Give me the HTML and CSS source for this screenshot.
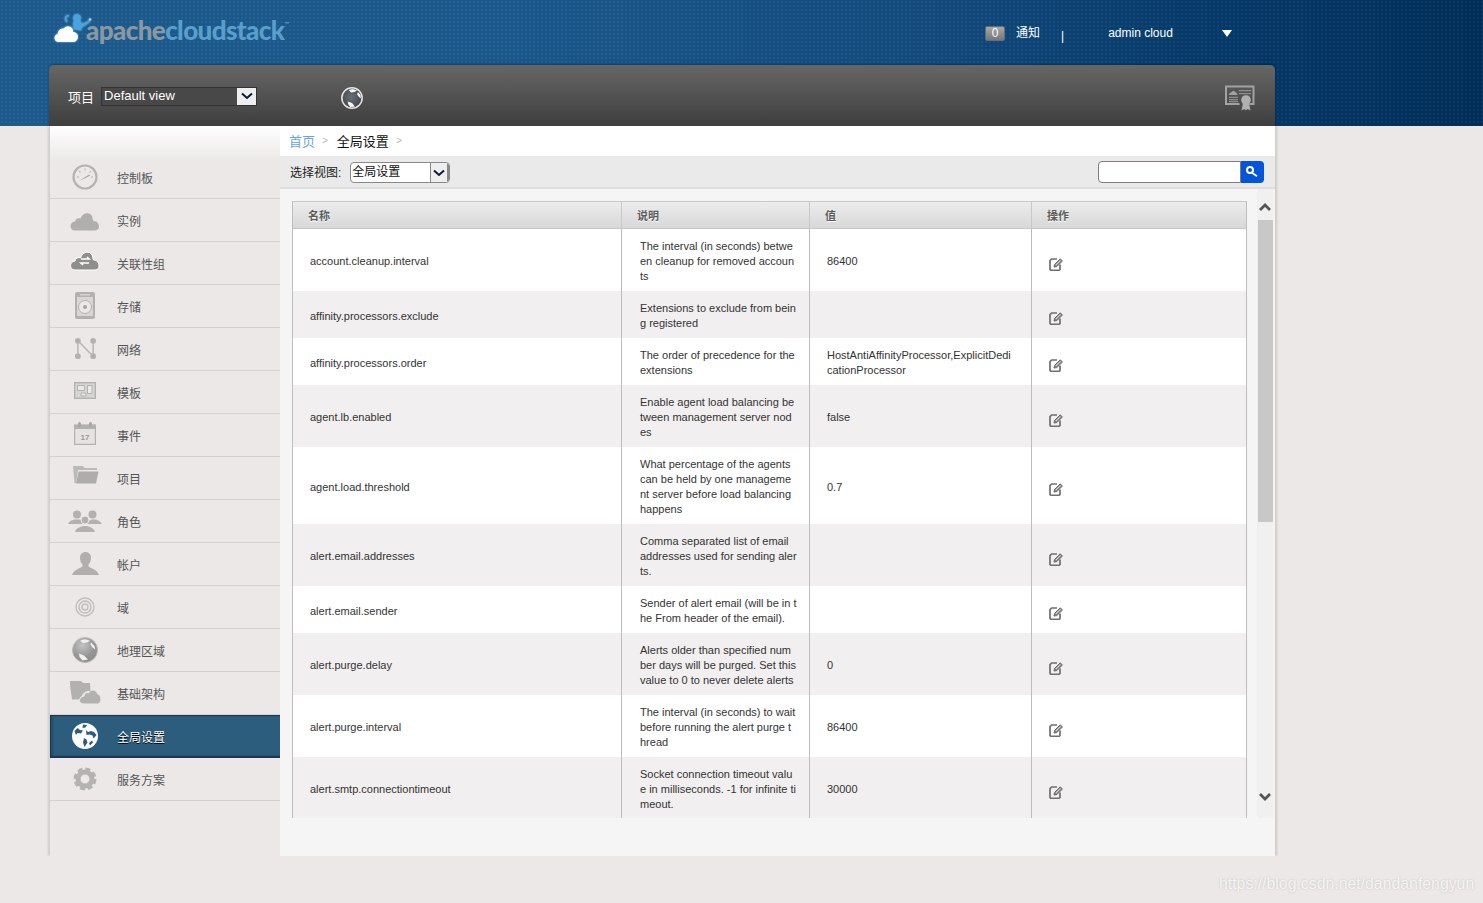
FILE: index.html
```html
<!DOCTYPE html>
<html lang="zh">
<head>
<meta charset="utf-8">
<title>CloudStack</title>
<link rel="stylesheet" href="styles.css">
</head>
<body>
<svg class="defs" width="0" height="0" aria-hidden="true">
  <symbol id="i-edit" viewBox="0 0 14 14">
    <path d="M8 2H2.600L1 3.600v8.900l.8.8h8.400l.8-.8V7.500" fill="none" stroke="#707070" stroke-width="1.700"/>
    <path d="M5 10l.6-2.600L11.200 1.800l2.200 2.200-5.600 5.600z" fill="#8a8a8a" stroke="#666" stroke-width="1" stroke-linejoin="round"/>
    <path d="M6.800 8l4.600-4.600" stroke="#fff" stroke-width=".8"/>
  </symbol>
  <radialGradient id="g-gloss" cx=".4" cy=".3" r=".8">
    <stop offset="0" stop-color="#c4c4c4"/><stop offset=".6" stop-color="#959595"/><stop offset="1" stop-color="#8a8a8a"/>
  </radialGradient>
  <radialGradient id="g-dark" cx=".45" cy=".45" r=".65">
    <stop offset="0" stop-color="#6a6f75"/><stop offset="1" stop-color="#3c4046"/>
  </radialGradient>
</svg>

<header class="masthead">
  <div class="topbar">
    <div class="logo">
      <svg class="logo-mark" width="38" height="33" viewBox="0 0 38 33">
        <path d="M13 9c-3-4-1-7 2-6" fill="none" stroke="#49a3de" stroke-width="1.600"/>
        <circle cx="23" cy="5" r="3.800" fill="#49a3de"/>
        <path d="M19 9l7-1 2 3 7-3.500.8 1.400-8 5.600-1 3-7-1.500z" fill="#49a3de"/>
        <circle cx="36" cy="6.500" r="1.200" fill="#a9d8f2"/>
        <path class="logo-cloud" d="M5 29c-3.200 0-4.500-2.200-4.500-4.300 0-2 1.300-3.400 3.100-3.800C3.900 17.400 6.800 15.200 9.500 15.600c1.400-2.300 4.500-3.200 6.800-1.800 2.200 1.200 3.200 3.200 2.700 5.200 2.700 0 5 1.800 5 4.700 0 3-2.300 5.300-5 5.300z" fill="#fff"/>
      </svg>
      <span class="logo-text"><span class="logo-a">apache</span><span class="logo-b">cloudstack</span><sup class="logo-tm">™</sup></span>
    </div>
    <div class="userbar">
      <span class="badge">0</span>
      <span class="notice">通知</span>
      <span class="pipe">|</span>
      <span class="user">admin cloud</span>
      <span class="tri"></span>
    </div>
  </div>
  <nav class="navbar">
    <span class="nav-label">项目</span>
    <div class="fake-select dark"><span class="fake-value">Default view</span><span class="fake-btn"><svg width="12" height="8" viewBox="0 0 12 8"><path d="M1 1.500l5 4.500 5-4.500" fill="none" stroke="#0a1c2e" stroke-width="2"/></svg></span></div>
    <svg class="nav-globe" width="22" height="22" viewBox="0 0 26 26">
      <circle cx="13" cy="13" r="12" fill="url(#g-dark)" stroke="#e3e6e9" stroke-width="1.800"/>
      <path d="M9 3.500l5-1 5 1.500-3 2-4 .5zM20 6l3 3.500.5 4-2.500-2-2-3zM8 17l5 2 3.500 4-5.500 1-2.500-3.500z" fill="#f4f5f6"/>
    </svg>
    <svg class="nav-cert" width="32" height="27" viewBox="0 0 32 27">
      <path d="M1 1.500h29.500V21H25.500v-2H28.500V3.500H3v15.500H15.500V21H1z" fill="#a2a2a2"/>
      <path d="M5 11c0-2 1.500-2.500 2.500-2.500C8 6.500 11 6.500 11.500 8.500c1.500 0 2 1.500 2 2.500z" fill="#a2a2a2"/>
      <path d="M15 6h12v1.300H15zM15 9h12v1.300H15zM5 12.800h9v1.300H5zM5 15h9v1.300H5zM5 17h9v1.300H5z" fill="#8e8e8e"/>
      <circle cx="22" cy="16" r="4.800" fill="#b0b0b0"/>
      <path d="M19 19l-1.500 7.500 3-1.500 1.500 1.500 1.500-1.500 3 1.500L25 19z" fill="#b0b0b0"/>
    </svg>
  </nav>
</header>

<div class="shell">
  <aside class="sidebar">
    <ul class="menu">
      <li class="item"><span class="ico"><svg width="26" height="26" viewBox="0 0 26 26"><circle cx="13" cy="13" r="11.500" fill="none" stroke="#b5b3b2" stroke-width="2.200"/><path d="M7 17l10-6.500 1 1.300z" fill="#a8a6a4"/><path d="M13 4.500v2M5 13h2M19 13h2M7 7l1.500 1.500M19 7l-1.500 1.500" stroke="#c4c2c1" stroke-width="1.300"/></svg></span><span class="lbl">控制板</span></li>
      <li class="item"><span class="ico low"><svg width="30" height="20" viewBox="0 0 30 20"><path d="M5 19.500c-6 0-6-8.500 0-9 .5-3 3.500-4 5.500-3C12 2 20-.5 22.500 6c-.500 2 1 4 1 4 6-.5 8 9.500 1.500 9.500z" fill="#b1afae"/></svg></span><span class="lbl">实例</span></li>
      <li class="item"><span class="ico up"><svg width="30" height="21" viewBox="0 0 30 21"><path d="M5 20c-6 0-6-8.500 0-9 .5-3 3.500-4 5.500-3C12 2 20-.5 22.500 6c0 2 1 4 1 4 6-.5 8 10 1.500 10z" fill="#8f8e8d" stroke="#fff" stroke-width="1"/><path d="M11 9h8l-2-2M19 13h-8l2 2" fill="none" stroke="#fff" stroke-width="1.700"/></svg></span><span class="lbl">关联性组</span></li>
      <li class="item"><span class="ico"><svg width="20" height="27" viewBox="0 0 20 27"><rect width="20" height="27" rx="2" fill="#b3b1b0"/><rect x="2" y="5" width="16" height="19" fill="#d9d7d6"/><circle cx="10" cy="15" r="6.500" fill="#ebe8e7" stroke="#b3b1b0"/><circle cx="10" cy="15" r="2" fill="#a5a3a2"/><rect x="5" y="2" width="10" height="1.500" fill="#d5d3d2"/></svg></span><span class="lbl">存储</span></li>
      <li class="item"><span class="ico"><svg width="21" height="21" viewBox="0 0 22 22"><path d="M3 3v16M3 3l16 16M19 3v16" stroke="#b7b5b4" stroke-width="1.500"/><circle cx="3" cy="3" r="3" fill="#b3b1b0"/><circle cx="19" cy="3" r="3" fill="#b3b1b0"/><circle cx="3" cy="19" r="3" fill="#b3b1b0"/><circle cx="19" cy="19" r="3" fill="#b3b1b0"/></svg></span><span class="lbl">网络</span></li>
      <li class="item"><span class="ico hi"><svg width="22" height="17" viewBox="0 0 22 17"><rect x=".7" y=".7" width="20.600" height="15.600" fill="#d8d6d5" stroke="#b3b1b0" stroke-width="1.400"/><path d="M3.500 3.500h7v5h-7zM13.500 3.500h4.500v8h-4.500zM7 11h5v3H7z" fill="#ebe8e7" stroke="#b3b1b0"/></svg></span><span class="lbl">模板</span></li>
      <li class="item"><span class="ico hi"><svg width="22" height="23" viewBox="0 0 22 23"><rect x=".6" y="3" width="20.800" height="19.400" fill="#e5e3e2" stroke="#b3b1b0" stroke-width="1.200"/><path d="M1 3h20v4H1z" fill="#b3b1b0"/><rect x="4" y="0" width="3" height="5" rx="1.500" fill="#a9a7a6"/><rect x="15" y="0" width="3" height="5" rx="1.500" fill="#a9a7a6"/><text x="11" y="18" class="cal">17</text></svg></span><span class="lbl">事件</span></li>
      <li class="item"><span class="ico up"><svg width="27" height="18" viewBox="0 0 27 18"><path d="M1 0h10l1.500 2H25v2H6L4 17H2.500z" fill="#bbb9b8"/><path d="M6.500 5.500H26.500L24 17.500H4z" fill="#afadac"/></svg></span><span class="lbl">项目</span></li>
      <li class="item"><span class="ico"><svg width="34" height="22" viewBox="0 0 34 22"><g fill="#b3b1b0"><circle cx="9" cy="4.500" r="4"/><path d="M0 14c1-3 4-3.500 6-4.500h6c2 1 3 2 4 4.500z"/><circle cx="24.500" cy="4.500" r="4"/><path d="M18 14c1-3 4-3.500 6-4.500h4c2 1 5 2 6 4.500z"/><circle cx="17" cy="10" r="4" stroke="#ebe8e7"/><path d="M7 22c1-4 5-5 8-6h4c3 1 7 2 8 6z"/></g></svg></span><span class="lbl">角色</span></li>
      <li class="item"><span class="ico"><svg width="27" height="23" viewBox="0 0 27 23"><path d="M13.500 0c3.500 0 5.500 2.500 5.500 6 0 2.500-1 5-2.500 6.500v2c2 1.500 8.500 3 10.500 8.500H0c2-5.500 8.500-7 10.500-8.500v-2C9 11 8 8.500 8 6c0-3.500 2-6 5.500-6z" fill="#b1afae"/></svg></span><span class="lbl">帐户</span></li>
      <li class="item"><span class="ico"><svg width="20" height="20" viewBox="0 0 20 20"><g fill="none" stroke="#c0bebd" stroke-width="1.400"><circle cx="10" cy="10" r="9"/><circle cx="10" cy="10" r="6"/><circle cx="10" cy="10" r="3"/></g></svg></span><span class="lbl">域</span></li>
      <li class="item"><span class="ico"><svg width="26" height="26" viewBox="0 0 26 26"><circle cx="13" cy="13" r="12.500" fill="url(#g-gloss)" stroke="#bdbbba"/><path d="M8 3.500l5-1.200 5 1.500-3 1.700-4 .5zM19 5.500l3.500 3.500.8 3.500-2.800-2-2-3zM7 16.500l5 2 4 4-5.500 1-3-3.500z" fill="#f2f1f0"/></svg></span><span class="lbl">地理区域</span></li>
      <li class="item"><span class="ico"><svg width="33" height="23" viewBox="0 0 33 23"><path d="M1 0h11l2 2h7l.5 8H18c-3 1-5 3-5 5-1.500 1-2.500 2-2.500 3.500H3L1 4z" fill="#b3b1b0"/><path d="M15 23c-6 0-6-7 0-8 .5-3 2.500-4 4.500-3 1.500-4 8-4 9 1 4 0 5 9.500 0 10z" fill="#b3b1b0" stroke="#ebe8e7"/></svg></span><span class="lbl">基础架构</span></li>
      <li class="item active"><span class="ico"><svg width="26" height="26" viewBox="0 0 26 26"><circle cx="13" cy="13" r="13" fill="#fff"/><path d="M11 1.500l4 .5-1.500 2.500-3 .5zM2.500 8l3-3 2.500 2 3 .5-2 3-3.500-.5-1.500 2zM14 7l2 2 3-1 3 1 2.500 3-3 3.500-1-3-3-1-3 .5zM12 15l2.500 1.500 1 3-3 4.500-1.500-4.500zM17 20l3-2.500 1 2-3 3z" fill="#2c5d7c"/></svg></span><span class="lbl">全局设置</span></li>
      <li class="item"><span class="ico"><svg width="24" height="24" viewBox="0 0 24 24"><circle cx="12" cy="12" r="7" fill="none" stroke="#b5b3b2" stroke-width="5"/><circle cx="12" cy="12" r="9" fill="none" stroke="#b5b3b2" stroke-width="5" stroke-dasharray="4.500 2.570"/></svg></span><span class="lbl">服务方案</span></li>
    </ul>
  </aside>
  <main class="content">
    <div class="crumbs"><a class="crumb-home">首页</a><span class="sep">&gt;</span><span class="crumb-cur">全局设置</span><span class="sep">&gt;</span></div>
    <div class="toolbar">
      <span class="view-label">选择视图:</span>
      <div class="fake-select light"><span class="fake-value">全局设置</span><span class="fake-btn"><svg width="12" height="8" viewBox="0 0 12 8"><path d="M1 1.500l5 4.500 5-4.500" fill="none" stroke="#0a1c2e" stroke-width="2"/></svg></span></div>
      <div class="search">
        <span class="search-input"></span>
        <span class="search-btn"><svg width="13" height="12" viewBox="0 0 13 12"><circle cx="4" cy="4" r="3" fill="#0a4fb0" stroke="#fff" stroke-width="2"/><path d="M6.500 6l5 3.500-1 1.500-5-3.500z" fill="#fff"/></svg></span>
      </div>
    </div>
    <div class="data-area">
      <div class="table-clip">
        <table class="grid">
          <colgroup><col class="c1"><col class="c2"><col class="c3"><col class="c4"></colgroup>
          <thead><tr><th>名称</th><th>说明</th><th>值</th><th>操作</th></tr></thead>
          <tbody>
            <tr><td>account.cleanup.interval</td><td>The interval (in seconds) between cleanup for removed accounts</td><td>86400</td><td class="act"><svg class="edit"><use href="#i-edit"/></svg></td></tr>
            <tr><td>affinity.processors.exclude</td><td>Extensions to exclude from being registered</td><td></td><td class="act"><svg class="edit"><use href="#i-edit"/></svg></td></tr>
            <tr><td>affinity.processors.order</td><td>The order of precedence for the extensions</td><td>HostAntiAffinityProcessor,ExplicitDedicationProcessor</td><td class="act"><svg class="edit"><use href="#i-edit"/></svg></td></tr>
            <tr><td>agent.lb.enabled</td><td>Enable agent load balancing between management server nodes</td><td>false</td><td class="act"><svg class="edit"><use href="#i-edit"/></svg></td></tr>
            <tr><td>agent.load.threshold</td><td>What percentage of the agents can be held by one management server before load balancing happens</td><td>0.7</td><td class="act"><svg class="edit"><use href="#i-edit"/></svg></td></tr>
            <tr><td>alert.email.addresses</td><td>Comma separated list of email addresses used for sending alerts.</td><td></td><td class="act"><svg class="edit"><use href="#i-edit"/></svg></td></tr>
            <tr><td>alert.email.sender</td><td>Sender of alert email (will be in the From header of the email).</td><td></td><td class="act"><svg class="edit"><use href="#i-edit"/></svg></td></tr>
            <tr><td>alert.purge.delay</td><td>Alerts older than specified number days will be purged. Set this value to 0 to never delete alerts</td><td>0</td><td class="act"><svg class="edit"><use href="#i-edit"/></svg></td></tr>
            <tr><td>alert.purge.interval</td><td>The interval (in seconds) to wait before running the alert purge thread</td><td>86400</td><td class="act"><svg class="edit"><use href="#i-edit"/></svg></td></tr>
            <tr><td>alert.smtp.connectiontimeout</td><td>Socket connection timeout value in milliseconds. -1 for infinite timeout.</td><td>30000</td><td class="act"><svg class="edit"><use href="#i-edit"/></svg></td></tr>
          </tbody>
        </table>
      </div>
      <div class="scrollbar">
        <svg width="14" height="10" viewBox="0 0 14 10"><path d="M2 8l5-5 5 5" fill="none" stroke="#555" stroke-width="2.800"/></svg>
        <div class="track"><div class="thumb"></div></div>
        <svg width="14" height="10" viewBox="0 0 14 10"><path d="M2 2l5 5 5-5" fill="none" stroke="#555" stroke-width="2.800"/></svg>
      </div>
    </div>
    <div class="foot"></div>
  </main>
</div>
<div class="watermark">https://blog.csdn.net/dandanfengyun</div>
</body>
</html>
```

FILE: styles.css
```css
* { box-sizing: border-box; }
html, body { margin: 0; padding: 0; }
body {
  height: 903px;
  overflow: hidden;
  position: relative;
  background: #ebe8e7;
  font-family: "Liberation Sans", "Noto Sans CJK SC", sans-serif;
  font-size: 12px;
  color: #333;
}
.defs { position: absolute; }

.masthead {
  height: 126px;
  padding-left: 49px;
  background-color: #1a5a8f;
  background-image:
    radial-gradient(circle, rgba(255,255,255,.05) 1px, transparent 1.3px),
    linear-gradient(90deg, #1c5a8c 0%, #195689 35%, #124a7c 62%, #063a6a 80%, #002d58 100%);
  background-size: 4px 4px, 100% 100%;
}
.topbar { height: 65px; display: flex; }
.logo { display: flex; align-items: flex-start; margin-left: 5px; padding-top: 12px; width: 931px; }
.logo-mark { margin-top: 1px; flex: none; margin-right: -6px; filter: drop-shadow(0 0 1px #6fbdec); }
.logo-text { font-family: "Lato", sans-serif; font-weight: 900; font-size: 26px; letter-spacing: -.6px; line-height: 36px; }
.logo-a { color: #8b98a2; }
.logo-b { color: #5a9fcc; }
.logo-tm { font-size: 6px; color: #8fa9bd; vertical-align: 14px; line-height: 0; font-weight: 400; }

.userbar { display: flex; align-items: flex-start; padding-top: 26px; color: #fff; }
.badge {
  width: 20px; height: 15px; border-radius: 2px;
  background: linear-gradient(#a8a8a8, #777);
  border: 1px solid #5d6f80;
  font-size: 12px; line-height: 13px; text-align: center; color: #fff;
}
.notice { margin-left: 11px; font-size: 12px; line-height: 15px; }
.pipe { margin-left: 21px; line-height: 18px; margin-top: 1px; }
.user { margin-left: 44px; line-height: 14px; }
.tri {
  margin-left: 49px; margin-top: 4px; width: 0; height: 0;
  border-left: 5px solid transparent; border-right: 5px solid transparent; border-top: 7px solid #fff;
}

.navbar {
  width: 1226px; height: 61px;
  display: flex; align-items: center;
  padding-left: 19px;
  border-radius: 5px 5px 0 0;
  background: linear-gradient(#666665, #3e3e3e);
  box-shadow: 0 -1px 2px rgba(0,0,0,.25);
}
.nav-label { color: #fff; font-size: 13px; margin-top: 1px; }
.fake-select { display: flex; }
.fake-select.dark {
  margin-left: 7px; margin-top: 1px; width: 156px; height: 19px;
  border: 1px solid #333; background: #484848; color: #fff;
  font-size: 13px; line-height: 15px;
}
.fake-value { flex: 1; padding-left: 2px; }
.fake-btn { width: 19px; display: flex; align-items: center; justify-content: center; background: #eee; }
.nav-globe { margin-left: 84px; margin-top: 4px; }
.nav-cert { margin-left: auto; margin-right: 19px; margin-top: 4px; }

.shell {
  width: 1225px; height: 730px; margin-left: 50px;
  display: flex;
  box-shadow: -2px 0 2px rgba(0,0,0,.12), 2px 0 2px rgba(0,0,0,.12);
  clip-path: inset(0 -5px 0 -5px);
}
.sidebar {
  width: 230px; flex: none;
  padding-top: 30px;
  background: linear-gradient(#fff 0, #ebe8e7 36px);
}
.menu { list-style: none; margin: 0; padding: 0; }
.item {
  height: 43px; display: flex; align-items: center;
  border-bottom: 1px solid #d3d2d1;
  color: #555; font-size: 12px;
}
.ico { width: 67px; flex: none; display: flex; justify-content: center; padding-left: 3px; margin-top: -1px; }
.ico svg { display: block; }
.ico.up { margin-top: -6px; }
.ico.hi { margin-top: -3px; }
.ico.low { margin-top: 1px; }
.lbl { margin-top: 1px; }
.cal { font: bold 8px "Liberation Sans", sans-serif; text-anchor: middle; fill: #9b9998; }
.item.active {
  background: #2c5d7c; color: #fff;
  border: 1px solid #1b3a50; border-width: 1px 0 2px 1px;
  text-shadow: 0 1px 0 #000;
  box-shadow: inset 2px 0 2px rgba(0,0,0,.2);
}
.item.active .ico { width: 66px; padding-left: 2px; }

.content { width: 995px; flex: none; display: flex; flex-direction: column; background: #f5f5f5; }
.crumbs { height: 30px; background: #fff; display: flex; align-items: center; padding: 0 0 2px 9px; font-size: 13px; }
.crumb-home { color: #6ba4dc; }
.sep { color: #b9b9b9; font-size: 10px; margin: 0 9px 0 7px; }
.crumb-cur { color: #111; }
.toolbar {
  height: 33px; display: flex; align-items: center;
  padding: 1px 11px 0 10px;
  background: #eaeaea;
  border-bottom: 2px solid #dedede;
  font-size: 12px; color: #222;
}
.view-label { margin-top: -1px; }
.fake-select.light {
  margin-left: 9px; margin-top: 1px; width: 100px; height: 21px;
  border: 1px solid #888; border-radius: 4px; background: #fff; overflow: hidden;
  line-height: 19px; color: #111;
}
.fake-select.light .fake-value { padding-left: 1px; }
.fake-select.light .fake-btn { background: #eee; border-left: 1px solid #888; border-right: 2px solid #888; }
.search { margin-left: auto; display: flex; }
.search-input { width: 143px; height: 22px; background: #fff; border: 1px solid #85797a; border-radius: 4px 0 0 4px; }
.search-btn { width: 23px; height: 22px; background: #0455de; border-radius: 0 4px 4px 0; display: flex; align-items: center; justify-content: center; }

.data-area { height: 629px; display: flex; padding: 12px 2px 0 12px; }
.table-clip { width: 955px; overflow: hidden; flex: none; }
.grid { width: 955px; border-collapse: separate; border-spacing: 0; table-layout: fixed; border-left: 1px solid #bdbdbd; border-right: 1px solid #bdbdbd; font-size: 11px; line-height: 15px; color: #333; }
.c1 { width: 328px; } .c2 { width: 188px; } .c3 { width: 222px; } .c4 { width: 215px; }
.grid th {
  height: 28px; padding: 3px 0 0 15px; text-align: left;
  background: linear-gradient(#ececec, #d8d8d8);
  border-top: 1px solid #c8c8c8; border-bottom: 1px solid #c8c8c8; border-left: 1px solid #c8c8c8;
  font-size: 11px; font-weight: 700; color: #5c5c5c; text-shadow: 0 1px 0 #fff;
}
.grid th:first-child { border-left: 0; }
.grid td {
  padding: 10px 13px 7px 17px; vertical-align: middle;
  word-break: break-all; border-left: 1px solid #bdbdbd; background: #fff;
}
.grid td:first-child { border-left: 0; }
.grid td:nth-child(2) { padding-left: 18px; padding-right: 12px; }
.grid td:nth-child(3) { padding-right: 18px; }
.grid tbody tr:nth-child(even) td { background: #f1efef; }
.edit { display: block; width: 14px; height: 14px; margin-top: 4px; }

.scrollbar { width: 16px; margin-left: 10px; background: #f0f0f0; display: flex; flex-direction: column; align-items: center; margin-top: -12px; height: 629px; }
.scrollbar svg { flex: none; margin: 13px 0 7px; }
.scrollbar svg:last-child { margin: 4px 0 16px; }
.track { flex: 1; width: 16px; padding-left: 1px; }
.thumb { height: 302px; background: #c8c8c8; margin-top: 1px; }
.foot { flex: 1; }

.watermark {
  position: absolute; left: 1219px; top: 875px;
  font-size: 15.84px; line-height: 18px; color: #f7f5f4; white-space: nowrap;
  text-shadow: 0 0 2px #bdbab9;
}
```
